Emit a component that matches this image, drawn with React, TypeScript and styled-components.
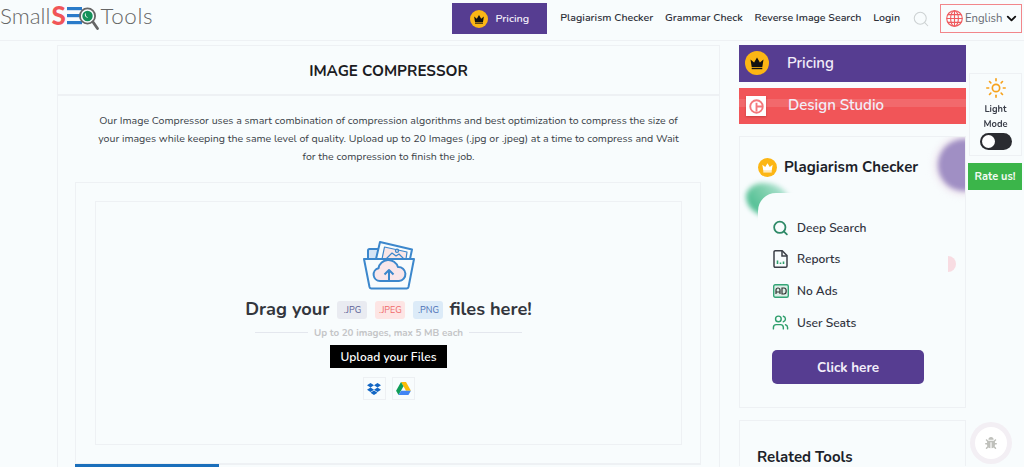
import React from 'react';
import styled, { createGlobalStyle } from 'styled-components';
import { Search, Sun, Users, ChevronDown } from 'lucide-react';
import { FaDropbox, FaBug } from 'react-icons/fa';

const PURPLE = '#563d91';
const RED = '#f15558';
const LINE = '#eef1f4';
const FONT = `'Nunito', 'Noto Sans', 'Open Sans', sans-serif`;

const GlobalStyle = createGlobalStyle`
  html, body {
    margin: 0;
    height: 467px;
    overflow: hidden;
    background: #f8fcfd;
    font-family: ${FONT};
  }
  * { box-sizing: border-box; }
`;

const Header = styled.header`
  height: 41px;
  display: flex;
  align-items: flex-start;
  justify-content: space-between;
  border-bottom: 1px solid ${LINE};
`;

const Logo = styled.div`
  display: flex;
  align-items: center;
  height: 30px;
  font-family: 'Lato', sans-serif;
  font-size: 22.4px;
  font-weight: 300;
  color: #666;
`;

const LogoS = styled.span`
  color: ${RED};
  font-weight: 900;
  font-size: 26px;
  margin-left: 1px;
  width: 16px;
`;

const LogoTools = styled.span`
  letter-spacing: 0.6px;
`;

const Nav = styled.nav`
  display: flex;
  align-items: center;
  margin: 3px 2px 0 0;
`;

const NavPricing = styled.div`
  width: 95px;
  height: 31px;
  margin-right: 13px;
  background: ${PURPLE};
  color: #f3effa;
  font-size: 10.8px;
  font-weight: 600;
  display: flex;
  align-items: center;
  justify-content: center;
  gap: 7px;
`;

const NavLink = styled.a`
  font-size: 10.6px;
  font-weight: 600;
  color: #2c2f38;
  margin-right: 12px;
  white-space: nowrap;
  position: relative;
  top: -1px;
`;

const LangBox = styled.div`
  width: 82px;
  height: 29px;
  margin-left: 10px;
  border: 1px solid #f2868a;
  display: flex;
  align-items: center;
  padding-left: 5px;
  gap: 2px;
  font-size: 11.3px;
  color: #666a72;
`;

const Main = styled.main`
  display: flex;
  align-items: flex-start;
  gap: 19px;
  padding: 4px 0 0 57px;
`;

const Panel = styled.section`
  width: 663px;
  border: 1px solid ${LINE};
  border-bottom: 0;
`;

const PanelTitle = styled.h1`
  margin: 0;
  height: 50px;
  padding-top: 2px;
  border-bottom: 2px solid ${LINE};
  display: flex;
  align-items: center;
  justify-content: center;
  font-size: 15.2px;
  font-weight: 700;
  color: #1b1b22;
`;

const Description = styled.p`
  margin: 16px auto 0;
  width: 586px;
  font-size: 10.6px;
  line-height: 18px;
  text-align: center;
  color: #3a3f48;
`;

const UploadOuter = styled.div`
  margin: 16px 18px 0 17px;
  height: 282px;
  border: 1px solid ${LINE};
  padding: 18px 18px 0 19px;
`;

const DropZone = styled.div`
  height: 244px;
  border: 1px solid ${LINE};
  display: flex;
  flex-direction: column;
  align-items: center;
  padding-top: 38px;
`;

const DragTitle = styled.div`
  margin-top: 5px;
  height: 28px;
  display: flex;
  align-items: center;
  font-size: 18.2px;
  font-weight: 700;
  color: #33363d;
  white-space: nowrap;
`;

const BadgeRow = styled.span`
  display: flex;
  gap: 8px;
  margin: 2px 6px 0 8px;
`;

const ExtBadge = styled.span<{ $bg: string; $fg: string }>`
  width: 30px;
  height: 18px;
  display: flex;
  align-items: center;
  justify-content: center;
  border-radius: 3px;
  background: ${props => props.$bg};
  color: ${props => props.$fg};
  font-size: 9px;
  font-weight: 400;
`;

const LimitRow = styled.div`
  margin-top: 3px;
  display: flex;
  align-items: center;
  gap: 6px;
  font-size: 9.8px;
  font-weight: 700;
  color: #c4c5c7;
`;

const LimitLine = styled.span`
  width: 53px;
  height: 1px;
  background: #e4e7ee;
`;

const UploadButton = styled.button`
  margin-top: 6px;
  width: 117px;
  height: 23px;
  border: 0;
  padding: 0;
  background: #000;
  color: #fff;
  font-family: ${FONT};
  font-size: 12px;
  font-weight: 600;
`;

const CloudRow = styled.div`
  margin-top: 9px;
  display: flex;
  gap: 6px;
`;

const CloudButton = styled.div`
  width: 23px;
  height: 23px;
  border: 1px solid #edf0f3;
  display: flex;
  align-items: center;
  justify-content: center;
  color: #1266c4;
`;

const Tabs = styled.div`
  margin: 0 18px 0 17px;
  height: 4px;
  border-top: 1px solid ${LINE};
`;

const ActiveTab = styled.div`
  width: 144px;
  height: 4px;
  background: #1a6fbb;
  margin-top: -1px;
`;

const Sidebar = styled.aside`
  width: 227px;
  display: flex;
  flex-direction: column;
`;

const Banner = styled.div<{ $color: string; $height: number }>`
  position: relative;
  overflow: hidden;
  height: ${props => props.$height}px;
  background: ${props => props.$color};
  color: #f2eef9;
  display: flex;
  align-items: center;
  padding-left: 6px;
  padding-bottom: 2px;
  font-size: 15px;
  font-weight: 600;
  margin-bottom: 6px;
`;

const BannerStripe = styled.span`
  position: absolute;
  left: 0;
  right: 0;
  top: 11px;
  height: 8px;
  background: rgba(255, 255, 255, 0.12);
`;

const BannerLabel = styled.span<{ $gap: number }>`
  position: relative;
  margin-left: ${props => props.$gap}px;
`;

const DesignIcon = styled.span`
  position: relative;
  width: 20px;
  height: 20px;
  margin: 2px 0 0 1px;
  background: #fff;
  box-shadow: 0 1px 2px rgba(120, 20, 20, 0.35);
  display: flex;
  align-items: center;
  justify-content: center;
`;

const Card = styled.div`
  position: relative;
  overflow: hidden;
  margin-top: 6px;
  height: 272px;
  border: 1px solid ${LINE};
  padding: 20px 0 0 18px;
`;

const CardHead = styled.div`
  display: flex;
  align-items: center;
  gap: 7px;
  font-size: 15px;
  font-weight: 700;
  color: #1d1f2a;
`;

const PurpleBlob = styled.span`
  position: absolute;
  right: -25px;
  top: 2px;
  width: 52px;
  height: 52px;
  border-radius: 50%;
  background: #a08fc4;
  box-shadow: 0 0 6px 3px #ecdfeb;
  filter: blur(2.5px);
`;

const GreenBlob = styled.span`
  position: absolute;
  left: 6px;
  top: 46px;
  width: 44px;
  height: 34px;
  background: linear-gradient(50deg, #35b585, #7fd0ad 55%, #cfeeea);
  border-radius: 40% 60% 0 60%;
  filter: blur(2.5px);
`;

const GreenCover = styled.span`
  position: absolute;
  left: 18px;
  top: 56px;
  width: 120px;
  height: 60px;
  background: #f8fcfd;
  border-radius: 18px 0 0 0;
`;

const PinkBlob = styled.span`
  position: absolute;
  left: 208px;
  top: 119px;
  width: 8px;
  height: 16px;
  border-radius: 0 8px 8px 0;
  background: #f8dce2;
  filter: blur(0.6px);
`;

const FeatureList = styled.ul`
  position: relative;
  list-style: none;
  margin: 35px 0 0 14px;
  padding: 0;
`;

const Feature = styled.li`
  height: 31.6px;
  display: flex;
  align-items: center;
  gap: 8px;
  font-size: 12px;
  font-weight: 600;
  color: #30333d;
`;

const FeatureIcon = styled.span`
  width: 17px;
  height: 18px;
  display: flex;
  align-items: center;
  justify-content: center;
`;

const ClickButton = styled.button`
  position: relative;
  display: block;
  margin: 12px 0 0 14px;
  width: 152px;
  height: 34px;
  border: 0;
  border-radius: 5px;
  background: ${PURPLE};
  color: #f3effa;
  font-family: ${FONT};
  font-size: 13.5px;
  font-weight: 700;
`;

const RelatedCard = styled.div`
  margin-top: 12px;
  border: 1px solid ${LINE};
  border-bottom: 0;
  padding: 27px 0 0 17px;
  height: 46px;
  font-size: 15px;
  line-height: 18px;
  font-weight: 700;
  color: #1d1f2a;
`;

const ModeWidget = styled.div`
  position: fixed;
  left: 969px;
  top: 73px;
  width: 53px;
  height: 83px;
  border: 1px solid ${LINE};
  display: flex;
  flex-direction: column;
  align-items: center;
  padding-top: 3px;
  font-size: 9.3px;
  line-height: 15px;
  font-weight: 700;
  color: #3b3f4a;
  text-align: center;
`;

const ModeLabel = styled.span`
  margin-top: 3px;
`;

const Toggle = styled.span`
  width: 32px;
  height: 17px;
  margin-top: 1px;
  border-radius: 9px;
  background: #2a2b30;
  padding: 2px;
  display: block;
`;

const Knob = styled.span`
  display: block;
  width: 13px;
  height: 13px;
  border-radius: 50%;
  background: #fff;
`;

const RateUs = styled.div`
  position: fixed;
  left: 968px;
  top: 163px;
  width: 54px;
  height: 27px;
  background: #3bb54a;
  color: #f4fbf4;
  font-size: 11px;
  font-weight: 700;
  display: flex;
  align-items: center;
  justify-content: center;
`;

const BugButton = styled.div`
  position: fixed;
  left: 975px;
  top: 427px;
  width: 32px;
  height: 32px;
  border-radius: 50%;
  background: #fff;
  box-shadow: 0 0 0 5px #f3eff4;
  display: flex;
  align-items: center;
  justify-content: center;
  color: #bfc0bb;
`;

const CrownBadge: React.FC<{ size: number; crown?: string; bg?: string }> = ({ size, crown = '#111', bg = '#fcb614' }) => (
  <svg width={size} height={size} viewBox="0 0 24 24">
    <circle cx="12" cy="12" r="12" fill={bg} />
    <path d="M5.5 8.5l3.6 3L12 6.5l2.9 5 3.6-3-1.2 7.5H6.7z" fill={crown} />
    <rect x="6.7" y="16.8" width="10.6" height="1.4" fill={crown} />
  </svg>
);

const Globe = () => (
  <svg width="17" height="17" viewBox="0 0 24 24" fill="none" stroke="#ef5a5e" strokeWidth="1.6">
    <circle cx="12" cy="12" r="11" />
    <ellipse cx="12" cy="12" rx="5.5" ry="11" />
    <path d="M12 1v22M2.5 6.5h19M1 12h22M2.5 17.5h19" />
  </svg>
);

const LogoMark = () => (
  <svg width="33" height="30" viewBox="0 0 33 30" fill="none">
    <rect x="0" y="7" width="15" height="3.2" fill="#2a7bc9" />
    <rect x="0" y="14" width="14" height="3.2" fill="#2a7bc9" />
    <rect x="0" y="21" width="15" height="3.2" fill="#2a7bc9" />
    <circle cx="20.5" cy="16" r="5.2" fill="#14915a" />
    <circle cx="20.5" cy="16" r="7.6" stroke="#666" strokeWidth="1.8" />
    <path d="M18.5 13.5c-.6 2 .3 3.6 2 4" stroke="#fff" strokeWidth="0.9" />
    <path d="M26 22l4.5 6.5" stroke="#666" strokeWidth="2.8" strokeLinecap="round" />
  </svg>
);

const UploadFolder = () => (
  <svg width="52" height="50" viewBox="0 0 52 50" fill="none" stroke="#3c87cc" strokeWidth="2" strokeLinejoin="round">
    <rect x="5" y="9" width="12" height="11" rx="1.5" fill="#d5e4f5" />
    <path d="M13 19l4-17 32 7.5-2 9.5" fill="#f8fcfd" />
    <path d="M19 19l2.5-12L44 12l-1 7" fill="#fae6e6" strokeWidth="1.2" />
    <path d="M23 19l6-6 4 3 3-2 5 5" strokeWidth="1.2" />
    <circle cx="34" cy="10.8" r="1.6" strokeWidth="1.2" />
    <path d="M1 19h50l-5.5 28a2 2 0 0 1-2 1.5H8.5a2 2 0 0 1-2-1.5z" fill="#f8fcfd" />
    <path d="M17 41a6.5 6.5 0 0 1-1.5-12.8 10 10 0 0 1 19.4-1.2 7 7 0 0 1 1 14z" fill="#f9e6ea" />
    <path d="M26 42V30M21.5 34.5L26 30l4.5 4.5" />
  </svg>
);

const DriveIcon = () => (
  <svg width="15" height="13" viewBox="0 0 24 21">
    <polygon points="8,0 16,0 24,14 16,14" fill="#fbbc05" />
    <polygon points="8,0 12,7 4,21 0,14" fill="#0f9d58" />
    <polygon points="8,14 24,14 20,21 4,21" fill="#4285f4" />
  </svg>
);

const ReportIcon = () => (
  <svg width="15" height="18" viewBox="0 0 15 18" fill="none" stroke="#3d4048" strokeWidth="1.5">
    <path d="M1 2a1.2 1.2 0 0 1 1.2-1.2h7L14 5.6V16a1.2 1.2 0 0 1-1.2 1.2H2.2A1.2 1.2 0 0 1 1 16z" />
    <path d="M9 1v5h5" />
    <path d="M4.5 14v-3.5M7.5 14v-1.5M10.5 14v-2.5" stroke="#2f9e6c" strokeWidth="1.6" />
  </svg>
);

const AdIcon = () => (
  <svg width="16" height="14" viewBox="0 0 16 14" fill="none">
    <rect x="0.7" y="0.7" width="14.6" height="12.6" rx="1.5" stroke="#35a577" strokeWidth="1.4" fill="#dcefe7" />
    <path d="M3 10V6a2 2 0 0 1 4 0v4M3 8h4M9 4h2a2.2 3 0 0 1 0 6H9z" stroke="#333" strokeWidth="1.2" />
  </svg>
);

export default function App() {
  return (
    <>
      <GlobalStyle />
      <Header>
        <Logo>
          Small<LogoS>S</LogoS><LogoMark /><LogoTools>Tools</LogoTools>
        </Logo>
        <Nav>
          <NavPricing><CrownBadge size={18} />Pricing</NavPricing>
          <NavLink>Plagiarism Checker</NavLink>
          <NavLink>Grammar Check</NavLink>
          <NavLink>Reverse Image Search</NavLink>
          <NavLink>Login</NavLink>
          <Search size={18} color="#cdd2d3" strokeWidth={1.4} />
          <LangBox>
            <Globe />English
            <ChevronDown size={15} color="#111" strokeWidth={3} />
          </LangBox>
        </Nav>
      </Header>
      <Main>
        <Panel>
          <PanelTitle>IMAGE COMPRESSOR</PanelTitle>
          <Description>
            Our Image Compressor uses a smart combination of compression algorithms and best optimization to compress the size of
            your images while keeping the same level of quality. Upload up to 20 Images (.jpg or .jpeg) at a time to compress and Wait
            for the compression to finish the job.
          </Description>
          <UploadOuter>
            <DropZone>
              <UploadFolder />
              <DragTitle>
                Drag your
                <BadgeRow>
                  <ExtBadge $bg="#e9ebf1" $fg="#5b5f96">.JPG</ExtBadge>
                  <ExtBadge $bg="#fde5e4" $fg="#ef6a6a">.JPEG</ExtBadge>
                  <ExtBadge $bg="#dcebf8" $fg="#4a6fb5">.PNG</ExtBadge>
                </BadgeRow>
                files here!
              </DragTitle>
              <LimitRow>
                <LimitLine />Up to 20 images, max 5 MB each<LimitLine />
              </LimitRow>
              <UploadButton>Upload your Files</UploadButton>
              <CloudRow>
                <CloudButton><FaDropbox size={14} /></CloudButton>
                <CloudButton><DriveIcon /></CloudButton>
              </CloudRow>
            </DropZone>
          </UploadOuter>
          <Tabs><ActiveTab /></Tabs>
        </Panel>
        <Sidebar>
          <Banner $color={PURPLE} $height={37}>
            <CrownBadge size={24} />
            <BannerLabel $gap={18}>Pricing</BannerLabel>
          </Banner>
          <Banner $color={RED} $height={36}>
            <BannerStripe />
            <DesignIcon>
              <svg width="15" height="15" viewBox="0 0 24 24" fill="none" stroke="#f4787b" strokeWidth="3">
                <circle cx="12" cy="12" r="10" />
                <path d="M12 12h9M12 6v14" />
              </svg>
            </DesignIcon>
            <BannerLabel $gap={22}>Design Studio</BannerLabel>
          </Banner>
          <Card>
            <PurpleBlob />
            <GreenBlob />
            <GreenCover />
            <PinkBlob />
            <CardHead>
              <CrownBadge size={19} crown="#fff" />Plagiarism Checker
            </CardHead>
            <FeatureList>
              <Feature><FeatureIcon><Search size={18} color="#2f8a68" strokeWidth={2.5} /></FeatureIcon>Deep Search</Feature>
              <Feature><FeatureIcon><ReportIcon /></FeatureIcon>Reports</Feature>
              <Feature><FeatureIcon><AdIcon /></FeatureIcon>No Ads</Feature>
              <Feature><FeatureIcon><Users size={17} color="#2f9e6c" strokeWidth={2} /></FeatureIcon>User Seats</Feature>
            </FeatureList>
            <ClickButton>Click here</ClickButton>
          </Card>
          <RelatedCard>Related Tools</RelatedCard>
        </Sidebar>
      </Main>
      <ModeWidget>
        <Sun size={22} color="#f7a21b" strokeWidth={1.8} />
        <ModeLabel>Light<br />Mode</ModeLabel>
        <Toggle><Knob /></Toggle>
      </ModeWidget>
      <RateUs>Rate us!</RateUs>
      <BugButton><FaBug size={12} /></BugButton>
    </>
  );
}
